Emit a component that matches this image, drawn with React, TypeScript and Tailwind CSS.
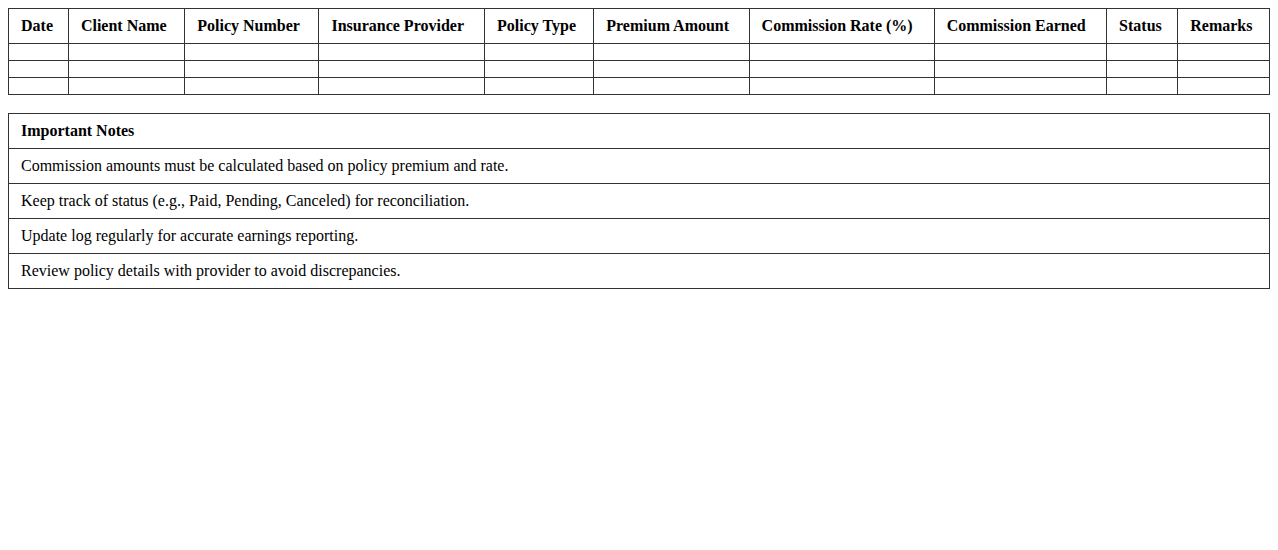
const COLUMNS = [
  'Date',
  'Client Name',
  'Policy Number',
  'Insurance Provider',
  'Policy Type',
  'Premium Amount',
  'Commission Rate (%)',
  'Commission Earned',
  'Status',
  'Remarks',
];

const NOTES = [
  'Commission amounts must be calculated based on policy premium and rate.',
  'Keep track of status (e.g., Paid, Pending, Canceled) for reconciliation.',
  'Update log regularly for accurate earnings reporting.',
  'Review policy details with provider to avoid discrepancies.',
];

export default function App() {
  return (
    <div
      className="min-h-[550px] bg-white p-2 text-black text-base leading-[18px]"
      style={{ fontFamily: '"Liberation Serif", "Times New Roman", serif' }}
    >
      <table className="w-full border-collapse">
        <thead>
          <tr>
            {COLUMNS.map((col) => (
              <th key={col} className="border border-[#333] px-3 py-2 text-left font-bold">
                {col}
              </th>
            ))}
          </tr>
        </thead>
        <tbody>
          {[0, 1, 2].map((row) => (
            <tr key={row}>
              {COLUMNS.map((col) => (
                <td key={col} className="border border-[#333] px-3 py-2"></td>
              ))}
            </tr>
          ))}
        </tbody>
      </table>

      <table className="w-full border-collapse mt-[18px]">
        <thead>
          <tr>
            <th className="border border-[#333] px-3 py-2 text-left font-bold">Important Notes</th>
          </tr>
        </thead>
        <tbody>
          {NOTES.map((note) => (
            <tr key={note}>
              <td className="border border-[#333] px-3 py-2">{note}</td>
            </tr>
          ))}
        </tbody>
      </table>
    </div>
  );
}
